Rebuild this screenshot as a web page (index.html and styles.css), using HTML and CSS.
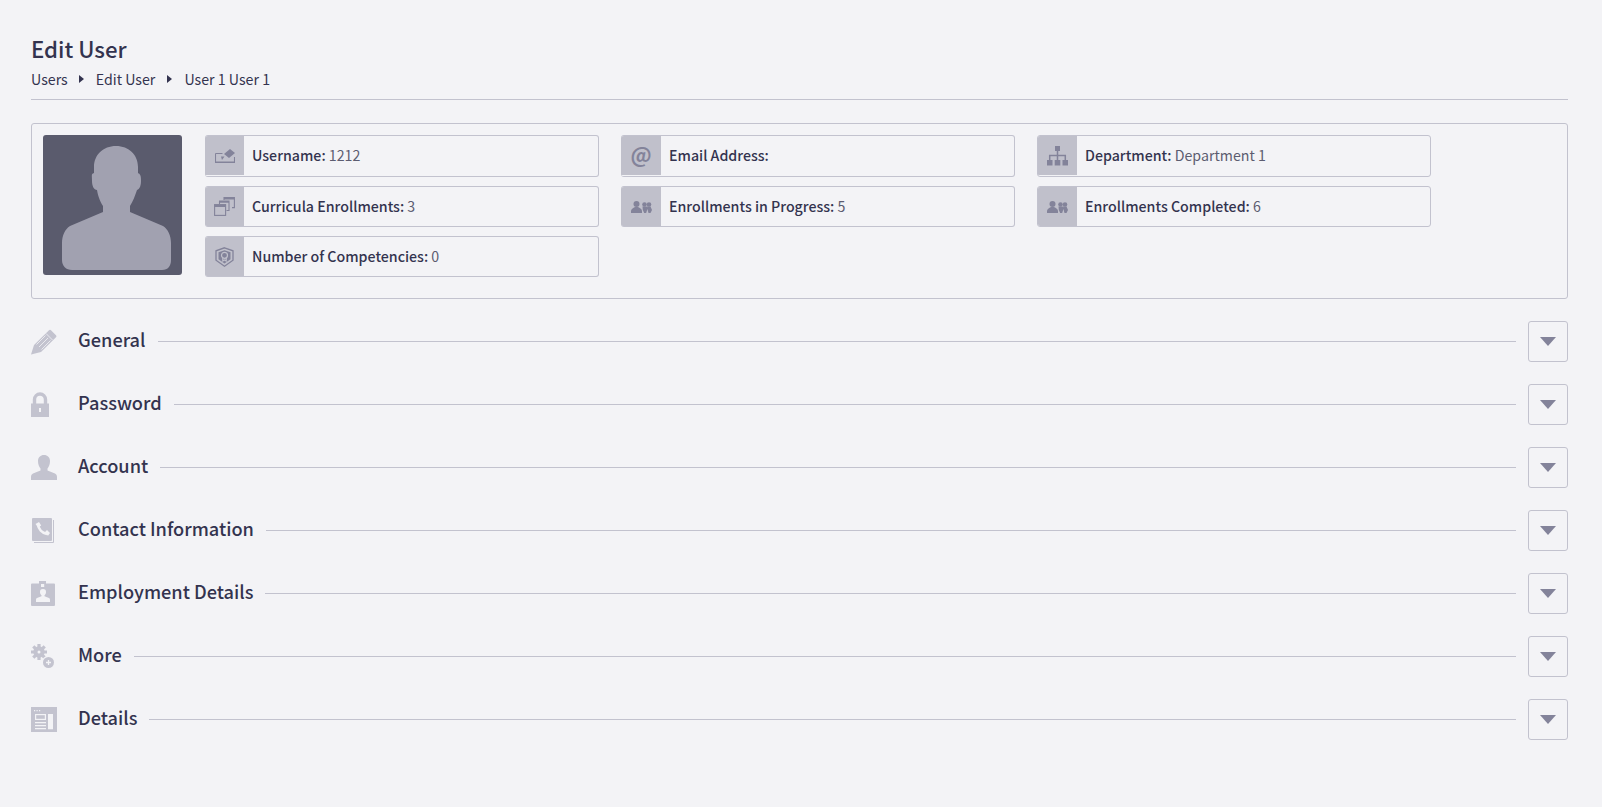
FILE: index.html
```html
<!DOCTYPE html>
<html lang="en">
<head>
<meta charset="utf-8">
<title>Edit User</title>
<link rel="stylesheet" href="styles.css">
</head>
<body>
<header class="page-head">
  <h1 class="page-title">Edit User</h1>
  <nav class="crumbs">
    <span>Users</span><i class="crumb-sep"></i><span>Edit User</span><i class="crumb-sep"></i><span>User 1 User 1</span>
  </nav>
</header>

<section class="summary">
  <div class="avatar">
    <svg viewBox="0 0 139 140" width="139" height="140"><path fill="#a1a1b0" d="M73 11C60 11 51 20 51 32V38C48 39 49 40 49 46C49 51 51 55 54 55C55 62 58 68 60 71V77L27 91C22 94 19 101 19 108V125C19 131 23 135 29 135H119C125 135 128 131 128 125V108C128 101 125 94 120 91L87 77V71C90 66 92 61 94 55C97 54 98 50 98 46C98 40 97 39 95 38V32C95 20 86 11 73 11Z"/></svg>
  </div>
  <div class="facts">
    <div class="fact"><span class="fact-icon"><svg viewBox="0 0 20 14" width="20" height="14"><path fill="#83839a" d="M9 5l6-5 5 4-6 5z"/><path fill="none" stroke="#83839a" stroke-width="1.100" d="M.5 4.500h7M19.500 8v5.500H.5v-9"/><path fill="#83839a" d="M6 7.500h3.500L7 11z"/><path fill="#83839a" d="M1 12.500h18v1H1z"/></svg></span><span class="fact-text"><b>Username:</b> 1212</span></div>
    <div class="fact"><span class="fact-icon"><span class="at">@</span></span><span class="fact-text"><b>Email Address:</b></span></div>
    <div class="fact"><span class="fact-icon"><svg viewBox="0 0 21 20" width="21" height="20"><path fill="#83839a" d="M8 0h5v5H8zM0 14h5.500v5.500H0zM7.700 14h5.600v5.500H7.700zM15.500 14H21v5.500h-5.500z"/><path fill="none" stroke="#83839a" stroke-width="1.500" d="M10.500 5v9M2.700 14V9.500h15.600V14"/></svg></span><span class="fact-text"><b>Department:</b> Department 1</span></div>

    <div class="fact"><span class="fact-icon"><svg viewBox="0 0 21 19" width="21" height="19"><g fill="none" stroke="#83839a" stroke-width="1.100"><path d="M10 3V.6h10.400v10H18"/><path d="M5.500 7V4h9.500v9.500h-2.500"/><rect x=".6" y="7.600" width="11" height="10.800"/></g><path fill="#83839a" d="M.6 7.600h11v2.500h-11zM5.500 4H15v1.800H5.500zM10 .6h10.400v1.800H10z"/></svg></span><span class="fact-text"><b>Curricula Enrollments:</b> 3</span></div>
    <div class="fact"><span class="fact-icon"><svg viewBox="0 0 21 12" width="21" height="12"><use href="#people"/></svg></span><span class="fact-text"><b>Enrollments in Progress:</b> 5</span></div>
    <div class="fact"><span class="fact-icon"><svg viewBox="0 0 21 12" width="21" height="12"><use href="#people"/></svg></span><span class="fact-text"><b>Enrollments Completed:</b> 6</span></div>

    <div class="fact"><span class="fact-icon"><svg viewBox="0 0 19 20" width="19" height="20"><path fill="none" stroke="#83839a" stroke-width="1.300" d="M9.500.8l8.500 3v9.400l-8.500 6-8.500-6V3.800z"/><path fill="#83839a" d="M9.500 3.200l6 2v7l-6 4.300-6-4.300v-7z"/><circle cx="9.500" cy="8.300" r="3" fill="none" stroke="#c0c0cb" stroke-width="1.200"/><path fill="none" stroke="#c0c0cb" stroke-width="1.200" d="M7.800 11v3l1.700-1 1.700 1v-3"/></svg></span><span class="fact-text"><b>Number of Competencies:</b> 0</span></div>
  </div>
</section>

<svg class="defs" width="0" height="0" aria-hidden="true">
  <defs>
    <g id="people" fill="#83839a">
      <circle cx="5.500" cy="3" r="3"/><path d="M0 12V10C0 8 2 7 4 6h3C9 7 11 8 11 10v2z"/>
      <circle cx="13.500" cy="3.500" r="2.300"/><circle cx="18" cy="3.500" r="2.300"/>
      <path d="M11.500 5.500h4.200l.8 2-1.300 4.500h-2L11.800 9zM16 5.500h3.500L21 9l-1.500 3h-2l-1-3.500z"/>
    </g>
  </defs>
</svg>

<div class="sections">
  <div class="section"><span class="section-icon"><svg viewBox="0 0 26 26" width="26" height="26"><path fill="#c3c3cf" d="M0 25.500l3-9.500L18 1.200q1-1 2 0l5 5q1 1 0 2L10 23z"/><path stroke="#f3f3f6" stroke-width=".8" fill="none" d="M15 4.500l6.500 6.500M14.500 6.500L5.500 15.500M17 9l-9 9M19.500 11.500l-9 9"/></svg></span><h2 class="section-title">General</h2><span class="section-line"></span><button class="toggle" type="button"><i class="caret"></i></button></div>

  <div class="section"><span class="section-icon"><svg viewBox="0 0 26 26" width="26" height="26"><path fill="none" stroke="#c3c3cf" stroke-width="3.400" d="M3.500 12V7.500a5.500 5.500 0 0 1 11 0V12"/><path fill="#c3c3cf" d="M0 11.500h18V25H0z"/><path fill="#f3f3f6" d="M8 16h2v4H8z"/></svg></span><h2 class="section-title">Password</h2><span class="section-line"></span><button class="toggle" type="button"><i class="caret"></i></button></div>

  <div class="section"><span class="section-icon"><svg viewBox="0 0 26 26" width="26" height="26"><path fill="#c3c3cf" d="M13 0c3.500 0 6 2.500 6 6 0 3-1 5.500-2.500 7.500v2L24 18.500c1.500.7 2 2 2 3.500v3H0v-3c0-1.500.5-2.800 2-3.500l7.500-3v-2C8 11.500 7 9 7 6c0-3.500 2.500-6 6-6z"/></svg></span><h2 class="section-title">Account</h2><span class="section-line"></span><button class="toggle" type="button"><i class="caret"></i></button></div>

  <div class="section"><span class="section-icon"><svg viewBox="0 0 26 26" width="26" height="26"><path fill="none" stroke="#c3c3cf" d="M22.500 2v22.500H3"/><rect x="1" y="0" width="20" height="23" rx="1" fill="#c3c3cf"/><path fill="none" stroke="#f3f3f6" stroke-width="2.600" d="M7 6.500C7.500 11 11 15 16 16"/><path fill="#f3f3f6" d="M4.500 6l3.500-2 2.200 3.500-3 2zM13.500 14.500l2.500-2.500 3 3-2 2.800z"/></svg></span><h2 class="section-title">Contact Information</h2><span class="section-line"></span><button class="toggle" type="button"><i class="caret"></i></button></div>

  <div class="section"><span class="section-icon"><svg viewBox="0 0 26 26" width="26" height="26"><path fill="#c3c3cf" d="M1 2.500h7V0h7v2.500h8a1 1 0 0 1 1 1V24a1 1 0 0 1-1 1H1a1 1 0 0 1-1-1V3.500a1 1 0 0 1 1-1z"/><path fill="#f3f3f6" d="M10 3h3.200v3H10zM12 8a3 3 0 0 1 3 3.200c0 1.300-.8 2.600-1.500 3.100v1l4.500 1.700c.7.300 1 1 1 2V21H5v-2c0-1 .3-1.700 1-2l4.500-1.700v-1C9.800 13.800 9 12.500 9 11.200A3 3 0 0 1 12 8z"/></svg></span><h2 class="section-title">Employment Details</h2><span class="section-line"></span><button class="toggle" type="button"><i class="caret"></i></button></div>

  <div class="section"><span class="section-icon"><svg viewBox="0 0 26 26" width="26" height="26"><circle cx="8" cy="8" r="3.600" fill="none" stroke="#c3c3cf" stroke-width="4.200"/><path stroke="#c3c3cf" stroke-width="3.200" d="M8 0v3.500M8 12.500V16M0 8h3.500M12.500 8H16M2.300 2.300l2.500 2.500M13.700 13.700l-2.500-2.500M2.300 13.700l2.500-2.500M13.700 2.300l-2.500 2.500"/><circle cx="17.500" cy="18.500" r="6.700" fill="#f3f3f6"/><circle cx="17.500" cy="18.500" r="5.500" fill="#c3c3cf"/><path stroke="#f3f3f6" stroke-width="1.300" d="M15 18.500h5M17.500 16v5"/></svg></span><h2 class="section-title">More</h2><span class="section-line"></span><button class="toggle" type="button"><i class="caret"></i></button></div>

  <div class="section"><span class="section-icon"><svg viewBox="0 0 26 26" width="26" height="26"><path fill="#c3c3cf" d="M0 0h26v25H0z"/><path fill="#f3f3f6" d="M3 3h1.200v1.200H3zM5.500 3h1.200v1.200H5.500zM8 3h1.200v1.200H8zM4 7h11v6H4zM4 15h11v1.300H4zM4 18h11v1.300H4zM4 21h11v1.300H4zM17 7h5v15.300h-5z"/><path fill="#c3c3cf" d="M5.200 8.200h8.600v3.600H5.200z"/></svg></span><h2 class="section-title">Details</h2><span class="section-line"></span><button class="toggle" type="button"><i class="caret"></i></button></div>
</div>
</body>
</html>
```

FILE: styles.css
```css
* { box-sizing: border-box; }
html, body { margin: 0; padding: 0; }
body {
  background: #f3f3f6;
  color: #33334f;
  font-family: "Noto Sans CJK SC", "Source Sans Pro", "Noto Sans", sans-serif;
  font-size: 14px;
  padding: 33px 34px 0 31px;
  height: 807px;
  overflow: hidden;
}
.page-head { border-bottom: 1px solid #c2c2ce; height: 67px; }
.page-title { margin: 0; font-size: 22.2px; font-weight: 500; line-height: 30px; }
.crumbs { display: flex; align-items: center; height: 24px; margin-top: 4px; font-size: 14.2px; }
.crumb-sep {
  width: 0; height: 0; margin: 0 12px 0 11px;
  border-left: 5px solid #33334f;
  border-top: 4px solid transparent;
  border-bottom: 4px solid transparent;
}
.crumb-sep + span + .crumb-sep { margin-left: 12px; }
.summary {
  display: flex;
  margin-top: 23px;
  height: 176px;
  padding: 11px;
  border: 1px solid #c2c2ce;
  border-radius: 3px;
}
.avatar { width: 139px; height: 140px; background: #5a5b6d; border-radius: 3px; flex: none; }
.avatar svg { display: block; }
.facts {
  margin-left: 23px;
  display: grid;
  grid-template-columns: repeat(3, 394px);
  grid-template-rows: 42px 41px 41px;
  column-gap: 22px;
  row-gap: 9px;
  align-content: start;
}
.fact {
  display: flex;
  align-items: center;
  border: 1px solid #c2c2ce;
  border-left: 0;
  border-radius: 3px;
  overflow: hidden;
}
.fact:nth-child(3n) { border-left: 1px solid #c2c2ce; }
.fact-icon {
  width: 39px;
  align-self: stretch;
  flex: none;
  background: #c0c0cb;
  display: flex;
  align-items: center;
  justify-content: center;
}
.fact:nth-child(3n+2) .fact-icon { width: 40px; }
.fact:nth-child(-n+3) .fact-icon { margin-bottom: 1px; }
.at { font-size: 21px; font-weight: 700; color: #83839a; line-height: 1; margin-top: -3px; }
.fact-text { margin-left: 8px; margin-top: -1px; color: #5c5c70; font-size: 14.2px; white-space: nowrap; }
.fact:nth-child(-n+3) .fact-text { margin-top: -2px; }
.fact-text b { color: #33334f; font-weight: 500; }
.defs { position: absolute; }
.sections { display: flex; flex-direction: column; margin-top: 22px; }
.section { display: flex; align-items: center; height: 41px; margin-bottom: 22px; }
.section-icon { width: 47px; flex: none; display: flex; align-items: center; }
.section-icon svg { display: block; }
.section-title { margin: 0 0 5px; font-size: 18.2px; font-weight: 500; line-height: 28px; white-space: nowrap; }
.section-line { flex: 1; height: 1px; background: #c2c2ce; margin: 0 12px; }
.toggle {
  width: 40px; height: 41px; padding: 0;
  background: transparent;
  border: 1px solid #c2c2ce;
  border-radius: 3px;
  display: flex; align-items: center; justify-content: center;
}
.caret {
  width: 0; height: 0;
  border-top: 9px solid #83839a;
  border-left: 8px solid transparent;
  border-right: 8px solid transparent;
}
```
